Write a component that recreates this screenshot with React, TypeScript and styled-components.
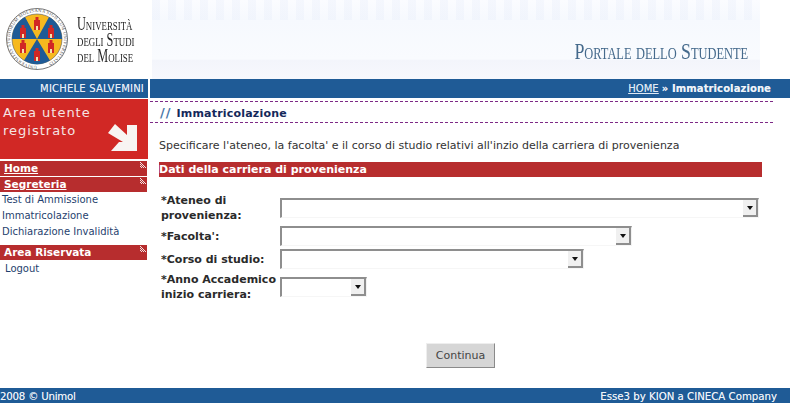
import React from 'react'
import styled, { createGlobalStyle } from 'styled-components'

const GlobalStyle = createGlobalStyle`
  html, body {
    margin: 0;
    padding: 0;
    background: #fff;
    font-family: "DejaVu Sans", Verdana, sans-serif;
    font-size: 11px;
    overflow: hidden;
  }
`

const Page = styled.div`
  width: 790px;
  height: 403px;
  display: flex;
  flex-direction: column;
`

const Header = styled.header`
  height: 79px;
  display: flex;
`

const Brand = styled.div`
  width: 152px;
  flex: none;
  display: flex;
  align-items: flex-start;
  padding: 8px 0 0 6px;
  box-sizing: border-box;
  gap: 9px;
`

const BrandName = styled.div`
  font-family: "Liberation Serif", serif;
  font-variant: small-caps;
  font-size: 18px;
  line-height: 16px;
  color: #1f1f1f;
  padding-top: 8px;
  white-space: nowrap;
  transform: scaleX(0.68);
  transform-origin: left top;
`

const Banner = styled.div`
  flex: 1;
  margin-right: 30px;
  background:
    repeating-linear-gradient(90deg, rgba(225, 232, 248, 0.25) 0 8px, transparent 8px 16px) 0 0 / 100% 20px no-repeat,
    linear-gradient(180deg, #fbfcff 0%, #f6f9fe 25%, #f9fbfe 75%, #f3f5fb 76%, #f7f8fd 100%);
  display: flex;
  justify-content: flex-end;
  align-items: flex-start;
  padding: 40px 12px 0 0;
`

const PortalName = styled.div`
  font-family: "Liberation Serif", serif;
  font-variant: small-caps;
  font-size: 23px;
  line-height: 24px;
  color: #456a8c;
  white-space: nowrap;
  transform: scaleX(0.775);
  transform-origin: right top;
`

const NavBar = styled.div`
  height: 19px;
  display: flex;
  gap: 2px;
  color: #e6eef7;
  font-size: 10px;
  line-height: 19px;
  text-shadow: 0 0 0.6px rgba(255, 255, 255, 0.6);
`

const UserName = styled.div`
  width: 148px;
  background: #1f5b96;
  text-align: right;
  padding-right: 4px;
  box-sizing: border-box;
  letter-spacing: 0.2px;
  white-space: nowrap;
`

const Breadcrumb = styled.div`
  flex: 1;
  background: #1f5b96;
  text-align: right;
  padding-right: 19px;

  a { color: #dfe9f5; text-decoration: underline; }
  b { color: #eef3f9; letter-spacing: 0.1px; }
`

const Body = styled.div`
  flex: 1;
  display: flex;
  padding-top: 1px;
`

const Sidebar = styled.aside`
  width: 150px;
  flex: none;
`

const PromoBox = styled.div`
  width: 148px;
  height: 60px;
  background: #d12825;
  color: #f5e4e3;
  font-size: 13px;
  line-height: 18px;
  letter-spacing: 1px;
  padding: 5px 0 0 3px;
  box-sizing: border-box;
  margin-bottom: 2px;
  display: flex;
  justify-content: space-between;

  svg { margin: 20px 10px 0 0; flex: none; }
`

const MenuHead = styled.a<{ $underline?: boolean }>`
  position: relative;
  display: block;
  width: 147px;
  height: 15px;
  margin-bottom: 1px;
  padding-left: 4px;
  box-sizing: border-box;
  background: #b72d2e;
  color: #fff;
  font-size: 10.5px;
  font-weight: bold;
  line-height: 15px;
  text-decoration: ${(p) => (p.$underline ? 'underline' : 'none')};

  &::after {
    content: '';
    position: absolute;
    top: 0;
    right: 0;
    width: 7px;
    height: 7px;
    background: repeating-conic-gradient(#efe4e4 0 25%, #b72d2e 0 50%) 0 0 / 2px 2px;
    clip-path: polygon(0 0, 100% 100%, 0 100%);
  }
`

const MenuList = styled.ul<{ $indent?: number; $top?: number; $after?: number }>`
  list-style: none;
  margin: ${(p) => p.$top ?? 0}px 0 ${(p) => p.$after ?? 0}px;
  padding: 0 0 0 ${(p) => p.$indent ?? 2}px;
`

const MenuItem = styled.li`
  height: 16px;
  line-height: 16px;
  font-size: 10px;
  color: #1f3f6e;
  white-space: nowrap;
`

const Main = styled.main`
  width: 623px;
  flex: none;
`

const TitleBar = styled.h1`
  margin: 2px 0 0;
  height: 22px;
  box-sizing: border-box;
  border-top: 1px dashed #7d2a86;
  border-bottom: 1px dashed #7d2a86;
  padding-left: 10px;
  font-size: 11px;
  line-height: 21px;
  letter-spacing: 0.2px;
  color: #14285a;
  font-weight: bold;

  span {
    color: #4a78a8;
    font-size: 13px;
    letter-spacing: 1px;
    margin-right: 5px;
  }
`

const Intro = styled.p`
  margin: 15px 0 0 9px;
  line-height: 16px;
  color: #333;
  white-space: nowrap;
`

const SectionBar = styled.h2`
  margin: 8px 0 0 9px;
  width: 603px;
  height: 15px;
  background: #b72d2e;
  color: #fff;
  font-size: 11px;
  line-height: 15px;
  font-weight: bold;
`

const Form = styled.form`
  margin: 16px 0 0 9px;
  display: grid;
  grid-template-columns: 121px 1fr;
  row-gap: 3px;
  align-items: center;
`

const Field = styled.label`
  display: contents;
`

const FieldLabel = styled.span`
  font-weight: bold;
  line-height: 15px;
  padding-left: 2px;
  white-space: nowrap;
  color: #2a2a2a;
`

const SelectBox = styled.div<{ $width: number }>`
  width: ${(p) => p.$width}px;
  height: 20px;
  box-sizing: border-box;
  border-top: 2px solid #8e8e8e;
  border-left: 2px solid #8e8e8e;
  border-right: 1px solid #f2f2f2;
  border-bottom: 1px solid #f6f6f6;
  display: flex;
  justify-content: flex-end;
  align-items: flex-start;
`

const SelectArrow = styled.div`
  width: 15px;
  height: 17px;
  box-sizing: border-box;
  background: #f0f0f0;
  border-right: 2px solid #8e8e8e;
  border-bottom: 2px solid #8e8e8e;
  display: flex;
  align-items: center;
  justify-content: center;

  &::before {
    content: '';
    border-left: 3.5px solid transparent;
    border-right: 3.5px solid transparent;
    border-top: 4px solid #111;
  }
`

const Actions = styled.div`
  margin-top: 41px;
  padding-left: 276px;
`

const Button = styled.button`
  width: 69px;
  height: 25px;
  padding: 0;
  background: #d6d6d6;
  border: 1px solid;
  border-color: #eee #8a8a8a #8a8a8a #eee;
  color: #444;
  font-family: "DejaVu Sans", Verdana, sans-serif;
  font-size: 11px;
`

const Footer = styled.footer`
  height: 15px;
  background: #1f5b96;
  color: #eef3f9;
  display: flex;
  justify-content: space-between;
  line-height: 17px;
  font-size: 10.2px;
  padding-right: 13px;
  text-shadow: 0 0 0.6px rgba(255, 255, 255, 0.6);

  span:first-child { letter-spacing: -0.2px; }
`

const towers = [
  [37, 24],
  [23, 32],
  [51, 32],
  [23, 47],
  [51, 47],
  [37, 55],
]

const Seal = () => (
  <svg width="62" height="62" viewBox="6 8 62 62" style={{ flex: 'none' }}>
    <defs>
      <path id="ring" d="M37 66a27 27 0 1 1 .01 0" />
    </defs>
    <circle cx="37" cy="39" r="30.5" fill="#fff" stroke="#777" strokeWidth="1" />
    <circle cx="37" cy="39" r="25" fill="#f6b91f" stroke="#555" strokeWidth="0.6" />
    <text fontFamily="Liberation Serif" fontSize="4.6" fill="#555" letterSpacing="0.3">
      <textPath href="#ring">UNIVERSITAS STUDIORUM MOLISANA SIGILLUM UNIVERSITATIS</textPath>
    </text>
    <path
      d="M37 39 L25 17 A25 25 0 0 0 12 39Z M37 39 L49 17 A25 25 0 0 1 62 39Z M37 39 L24 60.5 A25 25 0 0 0 50 60.5Z"
      fill="#1f5b96"
    />
    {towers.map(([x, y]) => (
      <g key={`${x}-${y}`} fill="#d12825">
        <rect x={x - 3} y={y - 4} width="6" height="10" />
        <rect x={x - 1.5} y={y - 7} width="3" height="4" />
        <rect x={x - 1} y={y + 2} width="2" height="4" fill="#f3e3b0" />
      </g>
    ))}
  </svg>
)

const ArrowIcon = () => (
  <svg width="30" height="28" viewBox="0 0 30 28">
    <path d="M0 9 L7 0 L19 11 L19 1 L29 1 L29 27 L3 27 L11 18 L15 18 Z" fill="#f8f4f2" />
  </svg>
)

const fields = [
  { label: ['*Ateneo di', 'provenienza:'], width: 479 },
  { label: ['*Facolta\':'], width: 352 },
  { label: ['*Corso di studio:'], width: 304 },
  { label: ['*Anno Accademico', 'inizio carriera:'], width: 87 },
]

const App: React.FC = () => {
  return (
    <Page>
      <GlobalStyle />
      <Header>
        <Brand>
          <Seal />
          <BrandName>
            Università
            <br />
            degli Studi
            <br />
            del Molise
          </BrandName>
        </Brand>
        <Banner>
          <PortalName>Portale dello Studente</PortalName>
        </Banner>
      </Header>

      <NavBar>
        <UserName>MICHELE SALVEMINI</UserName>
        <Breadcrumb>
          <a href="#">HOME</a> <b>» Immatricolazione</b>
        </Breadcrumb>
      </NavBar>

      <Body>
        <Sidebar>
          <PromoBox>
            <span>
              Area utente
              <br />
              registrato
            </span>
            <ArrowIcon />
          </PromoBox>
          <MenuHead href="#" $underline>Home</MenuHead>
          <MenuHead href="#" $underline>Segreteria</MenuHead>
          <MenuList $top={-1} $after={5}>
            <MenuItem>Test di Ammissione</MenuItem>
            <MenuItem>Immatricolazione</MenuItem>
            <MenuItem>Dichiarazione Invalidità</MenuItem>
          </MenuList>
          <MenuHead href="#">Area Riservata</MenuHead>
          <MenuList $indent={5}>
            <MenuItem>Logout</MenuItem>
          </MenuList>
        </Sidebar>

        <Main>
          <TitleBar>
            <span>//</span>Immatricolazione
          </TitleBar>
          <Intro>
            Specificare l'ateneo, la facolta' e il corso di studio relativi all'inzio della carriera di provenienza
          </Intro>
          <SectionBar>Dati della carriera di provenienza</SectionBar>
          <Form>
            {fields.map((f) => (
              <Field key={f.label[0]}>
                <FieldLabel>
                  {f.label.map((line, i) => (
                    <React.Fragment key={line}>
                      {i > 0 && <br />}
                      {line}
                    </React.Fragment>
                  ))}
                </FieldLabel>
                <SelectBox $width={f.width}>
                  <SelectArrow />
                </SelectBox>
              </Field>
            ))}
          </Form>
          <Actions>
            <Button type="button">Continua</Button>
          </Actions>
        </Main>
      </Body>

      <Footer>
        <span>2008 © Unimol</span>
        <span>Esse3 by KION a CINECA Company</span>
      </Footer>
    </Page>
  )
}

export default App
